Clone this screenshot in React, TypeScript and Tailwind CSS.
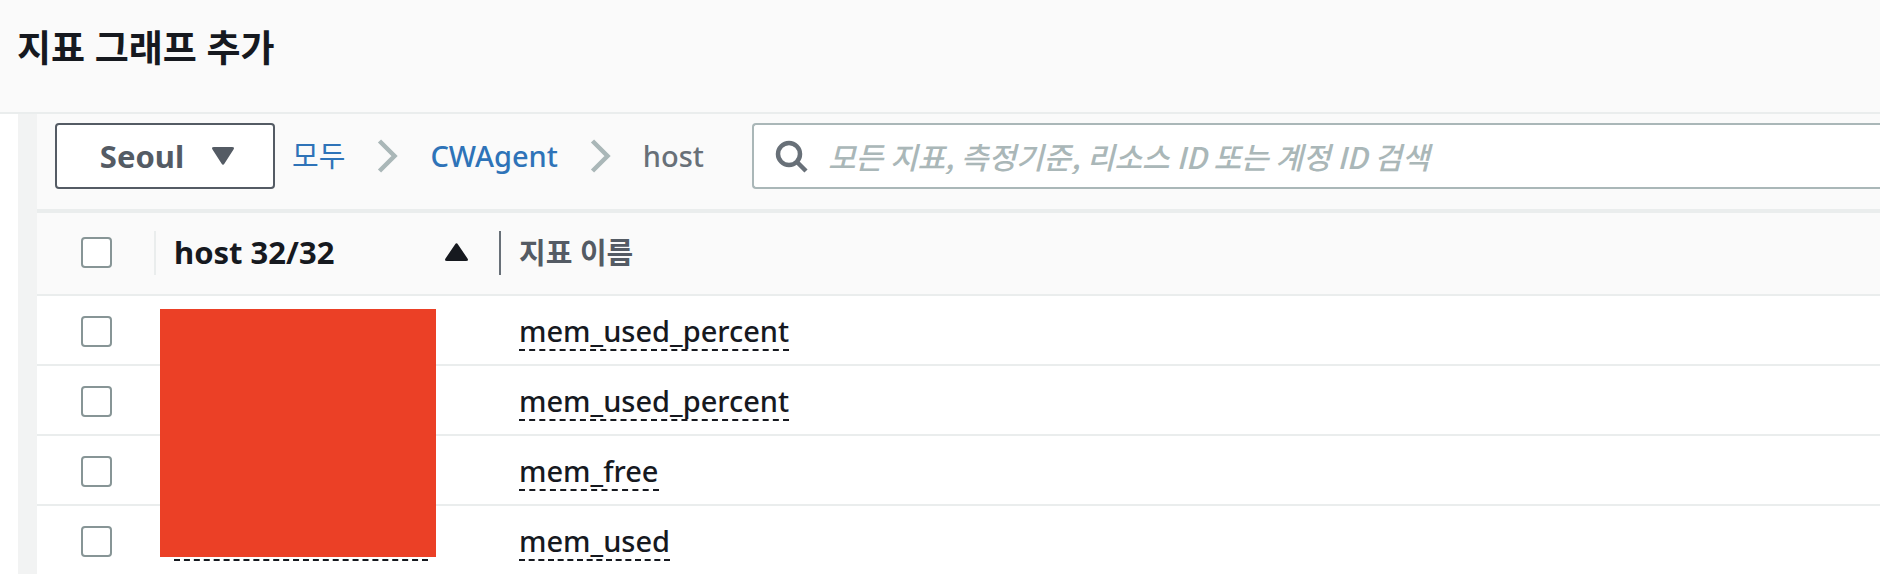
import { useState } from "react";

interface Metric {
  id: number;
  name: string;
}

const metrics: Metric[] = [
  { id: 1, name: "mem_used_percent" },
  { id: 2, name: "mem_used_percent" },
  { id: 3, name: "mem_free" },
  { id: 4, name: "mem_used" },
];

function Chevron() {
  return (
    <svg width="21" height="34" viewBox="0 0 21 34" fill="none" aria-hidden="true">
      <path d="M2.500 2 L17.500 17 L2.500 32" stroke="#aab7b8" strokeWidth="4.500" />
    </svg>
  );
}

function SearchIcon() {
  return (
    <svg width="34" height="34" viewBox="0 0 34 34" fill="none" stroke="#687078" aria-hidden="true">
      <circle cx="15" cy="15" r="11" strokeWidth="4.500" />
      <path d="M22.500 22.500 L32 32" strokeWidth="4.500" />
    </svg>
  );
}

function Checkbox({ label, checked, onChange }: { label: string; checked: boolean; onChange: () => void }) {
  return (
    <input
      type="checkbox"
      aria-label={label}
      checked={checked}
      onChange={onChange}
      className="block mx-auto size-[31px] appearance-none rounded border-2 border-[#879596] bg-white checked:bg-[#0073bb]"
    />
  );
}

export default function App() {
  const [query, setQuery] = useState("");
  const [selected, setSelected] = useState<number[]>([]);

  function toggle(id: number) {
    setSelected((prev) => (prev.includes(id) ? prev.filter((x) => x !== id) : [...prev, id]));
  }

  function toggleAll() {
    setSelected((prev) => (prev.length === metrics.length ? [] : metrics.map((m) => m.id)));
  }

  return (
    <div className="overflow-hidden bg-white font-['Noto_Sans','Noto_Sans_CJK_KR',sans-serif] text-[29px] leading-9 font-medium text-[#16191f]">
      {/* Header */}
      <header className="border-b-2 border-[#eaeded] bg-[#fafafa] px-[17px] pt-6 pb-10">
        <h1 className="text-[37px] leading-12 font-bold">지표 그래프 추가</h1>
      </header>

      <main className="ml-[18px] border-l-[19px] border-[#f2f3f3]">
        {/* Region, breadcrumb and search */}
        <div className="flex items-center border-b-4 border-[#eaeded] bg-[#fafafa] pt-[9px] pb-5 pl-[18px]">
          <button
            type="button"
            className="flex h-[66px] w-[220px] shrink-0 items-center justify-center gap-7 rounded border-2 border-[#545b64] bg-white pl-1 text-[31px] font-bold text-[#545b64]">
            Seoul
            <svg width="22" height="18" viewBox="0 0 22 18" fill="#545b64" aria-hidden="true">
              <path d="M2 0 H20 Q23 0 21.500 2.500 L12.500 16.500 Q11 19 9.500 16.500 L0.500 2.500 Q-1 0 2 0Z" />
            </svg>
          </button>

          <nav aria-label="breadcrumb" className="ml-[17px] flex shrink-0 items-center">
            <a href="#all" className="font-normal text-[#2e73b8]">모두</a>
            <span className="mx-8"><Chevron /></span>
            <a href="#cwagent" className="text-[#2e73b8]">CWAgent</a>
            <span className="mx-8"><Chevron /></span>
            <span className="text-[#687078]">host</span>
          </nav>

          <label className="ml-12 flex h-[66px] min-w-0 flex-1 items-center gap-5 rounded-l border-2 border-r-0 border-[#aab7b8] bg-white pl-5">
            <SearchIcon />
            <input
              type="text"
              value={query}
              onChange={(e) => setQuery(e.target.value)}
              aria-label="검색"
              placeholder="모든 지표, 측정기준, 리소스 ID 또는 계정 ID 검색"
              className="min-w-0 flex-1 bg-transparent font-['Noto_Sans_CJK_KR',sans-serif] text-[30px] outline-none placeholder:text-[#aab7b8] placeholder:italic"
            />
          </label>
        </div>

        {/* Metrics */}
        <div className="relative">
          <table className="w-full table-fixed border-separate border-spacing-0 text-left">
            <thead>
              <tr className="h-[83px] bg-[#fafafa]">
                <th className="w-[119px] border-b-2 border-[#eaeded] pb-0.5">
                  <div className="flex h-11 items-center border-r-2 border-[#eaeded] pl-0.5">
                    <Checkbox label="모두 선택" checked={selected.length === metrics.length} onChange={toggleAll} />
                  </div>
                </th>
                <th className="w-[345px] border-b-2 border-[#eaeded] pb-0.5">
                  <div className="flex h-11 items-center justify-between border-r-2 border-[#687078] pr-[31px] pb-0.5 pl-[18px] text-[31px]">
                    host 32/32
                    <svg width="23" height="18" viewBox="0 0 23 18" fill="#16191f" aria-hidden="true">
                      <path d="M2 18 H21 Q24 18 22.500 15.500 L13 1.500 Q11.500 -1 10 1.500 L0.500 15.500 Q-1 18 2 18Z" />
                    </svg>
                  </div>
                </th>
                <th className="border-b-2 border-[#eaeded] pb-0.5 pl-[18px] text-[#545b64]">지표 이름</th>
              </tr>
            </thead>
            <tbody>
              {metrics.map((m) => (
                <tr key={m.id} className="h-[70px]">
                  <td className="border-b-2 border-[#eaeded] pt-0.5">
                    <Checkbox label={m.name} checked={selected.includes(m.id)} onChange={() => toggle(m.id)} />
                  </td>
                  <td className="border-b-2 border-[#eaeded] pt-1 pl-[18px]">
                    <div className="h-[38px] w-[254px] border-b-2 border-dashed border-[#16191f]" />
                  </td>
                  <td className="border-b-2 border-[#eaeded] pt-1 pl-[18px]">
                    <span className="inline-block border-b-2 border-dashed border-[#16191f] align-top">{m.name}</span>
                  </td>
                </tr>
              ))}
            </tbody>
          </table>
          {/* Hides the host names */}
          <div className="absolute top-24 left-[123px] h-[248px] w-[276px] bg-[#eb4026]" />
        </div>
      </main>
    </div>
  );
}
